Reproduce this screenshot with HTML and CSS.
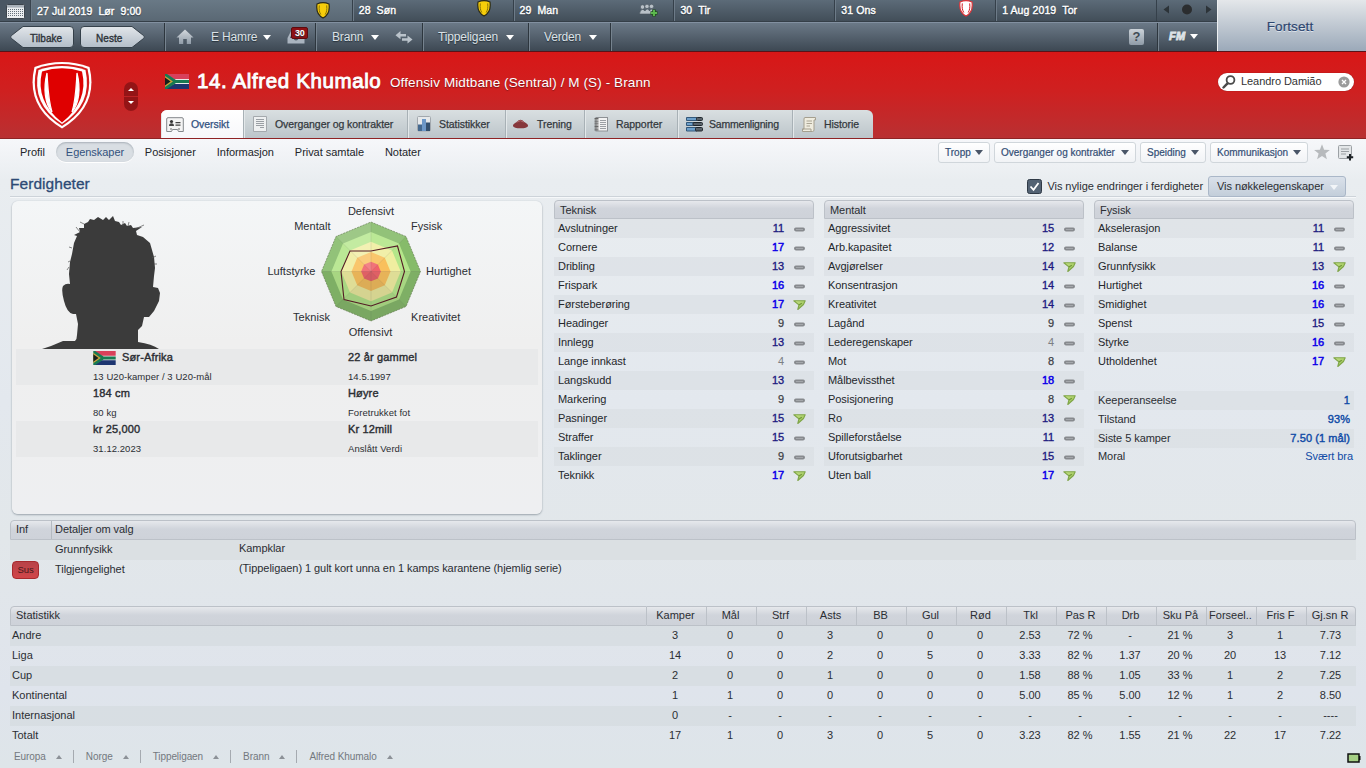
FILE: index.html
```html
<!DOCTYPE html>
<html lang="no">
<head>
<meta charset="utf-8">
<title>Alfred Khumalo</title>
<link rel="stylesheet" href="styles.css">
</head>
<body>
<svg class="defs" width="0" height="0">
  <defs>
    <linearGradient id="gArrow" x1="0" y1="0" x2="1" y2="1"><stop offset="0" stop-color="#c9e48a"/><stop offset="1" stop-color="#8fbc4c"/></linearGradient>
    <linearGradient id="gSteel" x1="0" y1="0" x2="0" y2="1"><stop offset="0" stop-color="#d4d9de"/><stop offset="1" stop-color="#8f9ba7"/></linearGradient>
    <linearGradient id="gBtn" x1="0" y1="0" x2="0" y2="1"><stop offset="0" stop-color="#e2e6ea"/><stop offset="1" stop-color="#b3bdc8"/></linearGradient>
    <symbol id="up" viewBox="0 0 13 12"><path d="M.8 1.800 12.200 1.800 10.500 5.500 4.800 10.500 5.900 5.900Z" fill="url(#gArrow)" stroke="#7fa548" stroke-width="1.100" stroke-linejoin="round"/><path d="M5.900 5.900 8.800 4.300" stroke="#6f9438" stroke-width="1.100"/></symbol>
    <symbol id="same" viewBox="0 0 13 12"><rect x="1" y="4.600" width="11" height="3.800" rx="1.800" fill="#878a8e"/><rect x="3" y="6" width="7" height="1" fill="#a4a7ab"/></symbol>
    <symbol id="shield" viewBox="0 0 16 17"><path d="M2 2Q8-.6 14 2 15.5 12 8 16 .5 12 2 2Z" fill="var(--a)" stroke="var(--b)" stroke-width="1.2"/><path d="M4.300 3.400C3.800 8 4.400 10 5.800 12.500M11.700 3.400C12.200 8 11.600 10 10.200 12.500" fill="none" stroke="var(--c)" stroke-width="1"/></symbol>
    <symbol id="flag" viewBox="0 0 24 15"><rect width="24" height="15" fill="#e8e8e8"/><path d="M0 0H24V5H9Z" fill="#d8405b"/><path d="M0 15H24V10H9Z" fill="#1d3570"/><path d="M0 0H2L11 6H24V9H11L2 15H0Z" fill="#177a52"/><path d="M0 2 8 7.5 0 13Z" fill="#c9a43c"/><path d="M0 3.600 5.600 7.500 0 11.400Z" fill="#16201d"/></symbol>
  </defs>
</svg>
<header class="top">
  <div class="bars">
    <div class="dates">
      <div class="cal"><svg width="19" height="15" viewBox="0 0 19 15"><rect x=".5" y=".5" width="18" height="14" rx="1" fill="#eceff1" stroke="#3c454d"/><rect x="1" y="1" width="17" height="2.600" fill="#aab2ba"/><path d="M2 5.500H17M2 7.500H17M2 9.500H17M2 11.500H17" stroke="#66717b" stroke-dasharray="1 1"/></svg></div>
      <div class="date now"><b>27 Jul 2019</b><b>Lør</b><b>9:00</b><svg class="sh yellow" width="16" height="17"><use href="#shield"/></svg></div>
      <div class="date"><b>28</b><b>Søn</b><svg class="sh yellow" width="16" height="17"><use href="#shield"/></svg></div>
      <div class="date"><b>29</b><b>Man</b><svg class="sh grp" width="19" height="14" viewBox="0 0 19 14"><g fill="#b9c1c8" stroke="#47525c" stroke-width=".6"><circle cx="3.500" cy="4" r="2.200"/><circle cx="8" cy="3.400" r="2.200"/><circle cx="12.500" cy="3.400" r="2.200"/><path d="M.5 11Q1 6.500 3.500 6.500 5 6.500 6 8 7 6 8.200 6 10 6.200 10.500 8 11.500 6 13 6 15 6.500 15.500 11Z"/></g><path d="M15 6.500V13.500M11.500 10H18.500" stroke="#234f20" stroke-width="3.600"/><path d="M15 7V13M12 10H18" stroke="#5cb84e" stroke-width="1.900"/></svg></div>
      <div class="date"><b>30</b><b>Tir</b></div>
      <div class="date"><b>31 Ons</b><svg class="sh red" width="16" height="17"><use href="#shield"/></svg></div>
      <div class="date"><b>1 Aug 2019</b><b>Tor</b></div>
      <div class="ctl"><svg width="60" height="20" viewBox="0 0 60 20"><path d="M12 5.500V13.500L6.500 9.500ZM49 5.500V13.500L54.500 9.500Z" fill="#2c3338"/><circle cx="30" cy="9.500" r="5" fill="#2b2d2f"/></svg></div>
    </div>
    <nav class="nav">
      <div class="navbtns">
        <svg class="navshape" width="64" height="22" viewBox="0 0 64 22"><path d="M13 .5H60Q63.500 .5 63.500 4V18Q63.500 21.500 60 21.500H13L1.500 12.500Q-.5 11 1.500 9.500Z"/></svg><span>Tilbake</span>
        <svg class="navshape" width="65" height="22" viewBox="0 0 65 22"><path d="M52 .5H4Q.5 .5 .5 4V18Q.5 21.500 4 21.500H52L63.500 12.500Q65.500 11 63.500 9.500Z"/></svg><span>Neste</span>
      </div>
      <div class="seg s1"><svg width="18" height="16" viewBox="0 0 18 16"><path d="M9 .5 17.500 8.500H15V15H10.800V10H7.200V15H3V8.500H.5Z" fill="url(#gSteel)"/></svg><span class="hamre">E Hamre</span><i class="dn"></i>
        <span class="inbox"><svg width="18" height="14" viewBox="0 0 18 14"><path d="M4 1H14L17.500 8V13.500H.5V8Z" fill="#aab4bf"/><path d="M5 3H13L15 8H11.500Q11 10.500 9 10.500T6.500 8H3Z" fill="#4c5863"/></svg><em>30</em></span></div>
      <div class="seg s2"><span>Brann</span><i class="dn"></i><svg width="18" height="14" viewBox="0 0 18 14"><path d="M5.500 1 .5 5.200 5.500 9.200V6.500H11V4H5.500ZM12.500 5.500 17.500 9.500 12.500 13.500V10.800H7V8.300H12.500Z" fill="#bac3cb"/></svg></div>
      <div class="seg s3"><span>Tippeligaen</span><i class="dn"></i></div>
      <div class="seg s4"><span>Verden</span><i class="dn"></i></div>
      <div class="seg s5"><span class="help">?</span></div>
      <div class="seg s6"><b class="fm">FM</b><i class="dn"></i></div>
    </nav>
  </div>
  <div class="continue">Fortsett</div>
</header>

<section class="hero">
  <svg class="crest" width="62" height="68" viewBox="0 0 62 68"><path d="M3.500 6Q31-4 58.500 6 68 45 31 67.500-6 45 3.500 6Z" fill="#fff"/><path d="M5.500 7.700Q31-1.500 56.500 7.700 65 44 31 65-3 44 5.500 7.700Z" fill="#d31b1b"/><path d="M7.500 9Q31 1 54.500 9 62 43 31 63 0 43 7.500 9Z" fill="#fff"/><path d="M11 10.500Q31 4 51 10.500 58 40 31 61.500 4 40 11 10.500Z" fill="#df0000"/><path d="M16 12C12 28 14 43 21 51 17 38 17 26 16 12ZM46 12C50 28 48 43 41 51 45 38 45 26 46 12Z" fill="#fff" stroke="#fff" stroke-width="1.200"/></svg>
  <div class="spin"><i class="t"></i><i class="b"></i></div>
  <div class="person">
    <div class="who"><svg width="24" height="15"><use href="#flag"/></svg><h1>14. Alfred Khumalo</h1><span>Offensiv Midtbane (Sentral) / M (S) - Brann</span></div>
    <div class="tabs">
      <div class="tab on t1"><svg width="18" height="16" viewBox="0 0 18 16"><path d="M2 .7H16Q17.300 .7 17.300 2V14.500H12.500L11.500 12.500H6.500L5.500 14.500H.7V2Q.7 .7 2 .7Z" fill="#f4f4f4" stroke="#83878b"/><circle cx="5.500" cy="4.500" r="1.600" fill="#333"/><path d="M3 9Q3 6.300 5.500 6.300T8 9ZM9.500 5H14.500V6.200H9.500ZM9.500 7.600H14.500V8.800H9.500Z" fill="#444"/><path d="M5 13V11M13 13V11" stroke="#999" stroke-width="1.500"/></svg>Oversikt</div>
      <div class="tab t2"><svg width="14" height="16" viewBox="0 0 14 16"><path d="M.5 .5H13.500V15.500H.5Z" fill="#eef0f1" stroke="#a4a9ad"/><path d="M3 3.500H11M3 5.500H11M3 7.500H11M3 9.500H11M7 11.500H11" stroke="#9a9fa4"/></svg>Overganger og kontrakter</div>
      <div class="tab t3"><svg width="14" height="16" viewBox="0 0 14 16"><rect x=".5" y=".5" width="13" height="14.500" rx="1" fill="#e6e9eb" stroke="#a2a8ae"/><path d="M1 8.500H5V15H1Z" fill="#45698f"/><path d="M5 3H9V15H5Z" fill="#6d98c8"/><path d="M9 6.500H13V15H9Z" fill="#34506e"/></svg>Statistikker</div>
      <div class="tab t4"><svg width="17" height="12" viewBox="0 0 18 12"><path d="M1 8Q1 6 5 4 9-1 13 4 17 6 17 8 16 10.500 9 10.500T1 8Z" fill="#87383c"/><path d="M5 4Q9 1 12.500 4" fill="none" stroke="#b26d70"/></svg>Trening</div>
      <div class="tab t5"><svg width="14" height="15" viewBox="0 0 14 15"><rect x="2" y=".5" width="11.500" height="13.500" fill="#f2f2f2" stroke="#8d9195"/><path d="M6 3.500H12M6 5.500H12M6 7.500H12M6 9.500H12M6 11.500H12" stroke="#9b9fa3"/><path d="M2.500 1V14" stroke="#666" stroke-width="4" stroke-dasharray="1 .6"/></svg>Rapporter</div>
      <div class="tab t6"><svg width="17" height="15" viewBox="0 0 17 15"><g fill="#6da0cb" stroke="#34597a"><path d="M.5 .5H11V3.500H.5ZM.5 5.500H8V8.500H.5ZM.5 10.500H11V14H.5Z"/></g><g fill="#59626a" stroke="#20272d"><rect x="10.500" y=".5" width="6" height="3" rx="1"/><rect x="7" y="5.500" width="9.500" height="3" rx="1"/><rect x="9.500" y="10.500" width="7" height="3.500" rx="1"/></g></svg>Sammenligning</div>
      <div class="tab t7"><svg width="14" height="15" viewBox="0 0 14 15"><path d="M3 .5H13.500V3H12V13Q12 14.500 10.500 14.500H.5V12H2V2Q2 .5 3 .5Z" fill="#efecdf" stroke="#a49f8f"/><path d="M4.500 4H10M4.500 6.500H10M4.500 9H8" stroke="#a9a493"/><path d="M.5 12H9V14" fill="none" stroke="#a49f8f"/></svg>Historie</div>
    </div>
  </div>
  <div class="search"><svg width="14" height="14" viewBox="0 0 14 14"><circle cx="8.500" cy="5" r="3.900" fill="none" stroke="#4a4a4a" stroke-width="1.800"/><path d="M5.500 8.300 1.500 12.500" stroke="#4a4a4a" stroke-width="2.400" stroke-linecap="round"/></svg><span>Leandro Damião</span><svg width="12" height="12" viewBox="0 0 12 12"><circle cx="6" cy="6" r="5.600" fill="#9b9b9b"/><path d="M4 4 8 8M8 4 4 8" stroke="#fff" stroke-width="1.300"/></svg></div>
</section>

<main>
  <div class="sub">
    <div class="links"><span>Profil</span><span class="pill">Egenskaper</span><span>Posisjoner</span><span>Informasjon</span><span>Privat samtale</span><span>Notater</span></div>
    <div class="acts"><span class="b1">Tropp<i class="dn"></i></span><span class="b2">Overganger og kontrakter<i class="dn"></i></span><span class="b3">Speiding<i class="dn"></i></span><span class="b4">Kommunikasjon<i class="dn"></i></span>
      <svg class="star" width="16" height="16" viewBox="0 0 16 16"><path d="M8 .3 10.100 5.700 15.900 6 11.400 9.600 12.900 15.300 8 12.100 3.100 15.300 4.600 9.600 .1 6 5.900 5.700Z" fill="#b7babd"/></svg>
      <svg width="16" height="16" viewBox="0 0 16 16"><rect x=".5" y=".5" width="13" height="13" rx="1" fill="#e3e6e8" stroke="#9ca1a5"/><path d="M3 4H11M3 6.500H11M3 9H8" stroke="#9a9fa3"/><path d="M12 9V15.500M8.800 12.200H15.200" stroke="#1d2226" stroke-width="2"/></svg></div>
  </div>
  <div class="title"><h2>Ferdigheter</h2><svg class="chk" width="15" height="15" viewBox="0 0 15 15"><rect x=".5" y=".5" width="14" height="14" rx="2" fill="#536273" stroke="#2f3a46"/><path d="M3.500 7.500 6.500 10.800 11.500 4" fill="none" stroke="#fff" stroke-width="1.800"/></svg><span class="vis">Vis nylige endringer i ferdigheter</span><span class="key">Vis nøkkelegenskaper<i class="dn"></i></span></div>

  <div class="cols">
    <div class="card">
      <div class="pics">
        <svg class="face" width="120" height="133" viewBox="0 0 120 133"><path d="M0 133Q10 130 21 125H33Q35 123 35 119L36 108 34 98H31Q25 97 22 85 19 74 21 70 24 67 28 68L27 58 28 46 30 38 32 27 35 20 32 19 38 16 37 12 42 12 42 8 46 6 48 3 52 4 56 1 61 4 64 1 67 4 71 0 73 5 77 6 79 9 83 7 85 10 89 9 91 12 100 11 94 15 95 19 101 21 108 27 110 34 112 41 113 52 112 60 111 71 116 72 118 77 117 85 112 95 107 101 102 101 100 110 96 114V126Q110 128 117 133Z" fill="#3b3b3b"/><path d="M38 16 34 11M30 32 27 31M28 45 26 46M27 51 25 54M110 42 114 40M112 48 115 48M81 10 81 5M86 10 87 6M93 13 102 9M42 8 38 6" stroke="#555" stroke-width=".7"/></svg>
        <svg class="radar" width="250" height="140" viewBox="262 205 250 140">
          <g transform="translate(371 271.500)">
            <path fill="#86bb6a" d="M0-49.500 35-35 49.500 0 35 35 0 49.500-35 35-49.500 0-35-35Z"/>
            <path fill="#b4e68a" d="M0-39.600 28-28 39.600 0 28 28 0 39.600-28 28-39.600 0-28-28Z"/>
            <path fill="#f0eea0" d="M0-29.700 21-21 29.700 0 21 21 0 29.700-21 21-29.700 0-21-21Z"/>
            <path fill="#f9c05c" d="M0-19.500 13.800-13.800 19.500 0 13.800 13.800 0 19.500-13.800 13.800-19.500 0-13.800-13.800Z"/>
            <path fill="#f0646a" d="M0-9.800 6.900-6.900 9.800 0 6.900 6.900 0 9.800-6.900 6.900-9.800 0-6.900-6.900Z"/>
            <path fill="#fff" fill-opacity=".2" d="M0 0V-49.500L-35-35Z"/>
            <path fill="#fff" fill-opacity=".1" d="M0 0V-49.500L35-35ZM0 0-35-35-49.500 0Z"/>
            <path fill="#333" fill-opacity=".09" d="M0 0H49.500L35 35ZM0 0-49.500 0-35 35Z"/>
            <path fill="#333" fill-opacity=".14" d="M0 0V49.500L35 35ZM0 0V49.500L-35 35Z"/>
            <path stroke="#555" stroke-opacity=".12" d="M0-49V49M-49 0H49M-35-35 35 35M35-35-35 35"/>
            <path fill="none" stroke="#60744f" stroke-opacity=".6" stroke-dasharray="2 1" d="M0-49.500 35-35 49.500 0 35 35 0 49.500-35 35-49.500 0-35-35Z"/>
            <path fill="none" stroke="#541b25" stroke-width="1.100" d="M-21-20.500 0-20.500 26.500-25.500 33.500 0 25.500 25.500 0 34.500-27 28-30 0Z"/>
          </g>
          <g class="rl"><text x="371" y="215" text-anchor="middle">Defensivt</text><text x="411" y="230">Fysisk</text><text x="426" y="275">Hurtighet</text><text x="411" y="321">Kreativitet</text><text x="370.500" y="336" text-anchor="middle">Offensivt</text><text x="330" y="321" text-anchor="end">Teknisk</text><text x="315.500" y="275" text-anchor="end">Luftstyrke</text><text x="330.500" y="230" text-anchor="end">Mentalt</text></g>
        </svg>
      </div>
      <div class="bio alt2"><div><b><svg width="23" height="14" viewBox="0 0 23 14"><use href="#flag" width="23" height="14"/></svg>Sør-Afrika</b><small>13 U20-kamper / 3 U20-mål</small></div><div><b>22 år gammel</b><small>14.5.1997</small></div></div>
      <div class="bio"><div><b>184 cm</b><small>80 kg</small></div><div><b>Høyre</b><small>Foretrukket fot</small></div></div>
      <div class="bio alt2"><div><b>kr 25,000</b><small>31.12.2023</small></div><div><b>Kr 12mill</b><small>Anslått Verdi</small></div></div>
    </div>
    <div class="attrs" data-title="Teknisk" data-rows="Avslutninger 11|Cornere 17|Dribling 13|Frispark 16|Førsteberøring 17+|Headinger 9|Innlegg 13|Lange innkast 4|Langskudd 13|Markering 9|Pasninger 15+|Straffer 15|Taklinger 9|Teknikk 17+"></div>
    <div class="attrs" data-title="Mentalt" data-rows="Aggressivitet 15|Arb.kapasitet 12|Avgjørelser 14+|Konsentrasjon 14|Kreativitet 14|Lagånd 9|Lederegenskaper 4|Mot 8|Målbevissthet 18|Posisjonering 8+|Ro 13|Spilleforståelse 11|Uforutsigbarhet 15|Uten ball 17+"></div>
    <div class="third">
      <div class="attrs" data-title="Fysisk" data-rows="Akselerasjon 11|Balanse 11|Grunnfysikk 13+|Hurtighet 16|Smidighet 16|Spenst 15|Styrke 16|Utholdenhet 17+"></div>
      <div class="facts"><div><span>Keeperanseelse</span><b>1</b></div><div><span>Tilstand</span><b>93%</b></div><div><span>Siste 5 kamper</span><b>7.50 (1 mål)</b></div><div class="moral"><span>Moral</span><em>Svært bra</em></div></div>
    </div>
  </div>

  <div class="info">
    <div class="hd"><span class="c1">Inf</span><span>Detaljer om valg</span></div>
    <div class="ir alt"><span class="c1"></span><span class="c2">Grunnfysikk</span><span class="c3">Kampklar</span></div>
    <div class="ir"><span class="c1"><i class="sus">Sus</i></span><span class="c2">Tilgjengelighet</span><span class="c3">(Tippeligaen) 1 gult kort unna en 1 kamps karantene (hjemlig serie)</span></div>
  </div>

  <table class="stats">
    <thead><tr><th>Statistikk</th><th>Kamper</th><th>Mål</th><th>Strf</th><th>Asts</th><th>BB</th><th>Gul</th><th>Rød</th><th>Tkl</th><th>Pas R</th><th>Drb</th><th>Sku På</th><th>Forseel..</th><th>Fris F</th><th>Gj.sn R</th></tr></thead>
    <tbody>
      <tr><td>Andre</td><td>3</td><td>0</td><td>0</td><td>3</td><td>0</td><td>0</td><td>0</td><td>2.53</td><td>72 %</td><td>-</td><td>21 %</td><td>3</td><td>1</td><td>7.73</td></tr>
      <tr><td>Liga</td><td>14</td><td>0</td><td>0</td><td>2</td><td>0</td><td>5</td><td>0</td><td>3.33</td><td>82 %</td><td>1.37</td><td>20 %</td><td>20</td><td>13</td><td>7.12</td></tr>
      <tr><td>Cup</td><td>2</td><td>0</td><td>0</td><td>1</td><td>0</td><td>0</td><td>0</td><td>1.58</td><td>88 %</td><td>1.05</td><td>33 %</td><td>1</td><td>2</td><td>7.25</td></tr>
      <tr><td>Kontinental</td><td>1</td><td>1</td><td>0</td><td>0</td><td>0</td><td>0</td><td>0</td><td>5.00</td><td>85 %</td><td>5.00</td><td>12 %</td><td>1</td><td>2</td><td>8.50</td></tr>
      <tr><td>Internasjonal</td><td>0</td><td>-</td><td>-</td><td>-</td><td>-</td><td>-</td><td>-</td><td>-</td><td>-</td><td>-</td><td>-</td><td>-</td><td>-</td><td>----</td></tr>
      <tr><td>Totalt</td><td>17</td><td>1</td><td>0</td><td>3</td><td>0</td><td>5</td><td>0</td><td>3.23</td><td>82 %</td><td>1.55</td><td>21 %</td><td>22</td><td>17</td><td>7.22</td></tr>
    </tbody>
  </table>
</main>
<footer><span>Europa<i></i></span><span>Norge<i></i></span><span>Tippeligaen<i></i></span><span>Brann<i></i></span><span>Alfred Khumalo<i></i></span><svg class="bat" width="14" height="10" viewBox="0 0 14 10"><rect x="1" y="1" width="11" height="8" fill="#a5cf84" stroke="#111" stroke-width="1.500"/><path d="M12 3H13.500V7H12Z" fill="#111"/></svg></footer>
<script src="app.js"></script>
</body>
</html>
```
FILE: styles.css
```css
* { box-sizing: border-box; }
body { margin: 0; width: 1366px; height: 768px; overflow: hidden; font: 11px/13px "Liberation Sans", Arial, sans-serif; letter-spacing: -.06px; color: #2b2e33; background: linear-gradient(#f6f7fa 139px, #e9edf0 180px, #e3e8ee 400px, #e2e7ea 540px, #dfe4ec 690px, #dee5e9); display: flex; flex-direction: column; }
.defs { position: absolute; }
svg { display: block; flex: none; }
i, em { font-style: normal; }
.dn { width: 0; height: 0; border: 4px solid transparent; border-top: 5px solid currentColor; border-bottom: 0; flex: none; }

.top { display: flex; height: 52px; flex: none; border-bottom: 1px solid #5a1218; }
.bars { width: 1217px; }
.dates { display: flex; height: 22px; background: linear-gradient(#5c6b78, #424e59); border-bottom: 1px solid #353f48; color: #fff; }
.cal { width: 31px; padding: 4px 0 0 6px; background: #4a5763; border-right: 1px solid #39444e; }
.date { width: 161px; display: flex; gap: 6px; padding: 4px 0 0 6px; border-left: 1px solid #35404a; box-shadow: inset 1px 0 #6d7b88; text-shadow: 0 1px 1px #222c35; position: relative; }
.date b { font-weight: normal; font-size: 10.500px; letter-spacing: .1px; -webkit-text-stroke: .4px #fff; }
.date.now { width: 321px; padding-left: 6px; padding-top: 5px; background: linear-gradient(#697986, #5a6874); border-left: 0; }
.sh { position: absolute; top: 0; right: 21px; }
.now .sh { top: 2px; }
.grp { right: 15px; top: 3px; }
.yellow { --a: #f7ce0a; --b: #2a2a18; --c: #8b7408; }
.red { --a: #fff; --b: #e03338; --c: #d31c20; }
.ctl { flex: 1; border-left: 1px solid #35404a; }
.nav { height: 29px; display: flex; background: linear-gradient(#6b7987, #3d4853); border-top: 1px solid #8290a0; color: #dce2e7; font-size: 12px; }
.navbtns { width: 164px; padding: 3px 0 0 10px; display: grid; grid-template-columns: 65px 66px; grid-template-rows: 22px; column-gap: 5px; }
.navshape { grid-row: 1; fill: url(#gBtn); stroke: #35404a; }
.navbtns span { grid-row: 1; align-self: center; padding-top: 2px; font-size: 10px; letter-spacing: .05px; color: #2c3238; -webkit-text-stroke: .35px #2c3238; }
.navbtns span:nth-of-type(1) { grid-column: 1; padding-left: 20px; }
.navbtns span:nth-of-type(2) { grid-column: 2; padding-left: 16px; }
.navshape:nth-of-type(1) { grid-column: 1; }
.navshape:nth-of-type(2) { grid-column: 2; }
.seg { display: flex; align-items: center; border-left: 1px solid #2d363e; box-shadow: inset 1px 0 #76838f; text-shadow: 0 1px 1px #27313a; letter-spacing: -.15px; }
.seg .dn { color: #fff; margin: 1px 0 0 10px; }
.s1 { width: 151px; padding-left: 11px; }
.s1 > .dn { margin-left: 6px; }
.hamre { margin-left: 17px; }
.inbox { position: relative; margin-left: 16px; }
.inbox em { position: absolute; left: 4px; top: -3px; width: 17px; height: 12px; background: #8e1014; border: 1px solid #5d0a0e; border-radius: 2px; color: #fff; font: bold 9px/10px "Liberation Sans", sans-serif; text-align: center; }
.s2 { width: 107px; padding-left: 16px; }
.s2 .dn { margin-left: 8px; }
.s2 svg { margin-left: 16px; }
.s3 { width: 106px; padding-left: 15px; }
.s3 .dn, .s4 .dn { margin-left: 8px; }
.s4 { width: 82px; padding-left: 15px; }
.s5 { flex: 1; padding-right: 13px; justify-content: flex-end; }
.help { width: 15px; height: 16px; border-radius: 2px; background: linear-gradient(#ccd3d9, #8f9ba7); color: #414b55; font: bold 13px/16px "Liberation Sans", sans-serif; text-align: center; text-shadow: none; }
.s6 { width: 60px; padding: 0 0 2px 11px; }
.fm { font-style: italic; font-size: 11px; letter-spacing: .3px; -webkit-text-stroke: .9px #dce2e7; }
.s6 .dn { margin-left: 5px; }
.continue { flex: 1; background: linear-gradient(#e4e7ea, #9ba9b9); border-left: 1px solid #edf0f2; color: #2d466f; font-size: 13.500px; letter-spacing: .1px; line-height: 53px; text-align: center; padding-right: 4px; text-shadow: 0 1px #dfe5ec; -webkit-text-stroke: .2px #2d466f; }

.hero { height: 87px; flex: none; display: flex; background: linear-gradient(#d81717, #cf2020 45%, #b93032); border-bottom: 1px solid #8f2325; color: #fff; }
.crest { margin: 9px 0 0 31px; }
.spin { margin: 30px 0 0 31px; width: 14px; height: 29px; border-radius: 7px; background: linear-gradient(#941416 14px, #bd2224 14px, #bd2224 15px, #941416 15px); display: flex; flex-direction: column; justify-content: space-between; align-items: center; padding: 6px 0 7px; }
.spin i { border: 3px solid transparent; height: 0; }
.spin .t { border-top: 0; border-bottom-color: #fff; }
.spin .b { border-bottom: 0; border-top-color: #fff; }
.person { margin-left: 23px; display: flex; flex-direction: column; }
.who { display: flex; height: 58px; align-items: center; padding: 0 0 0 4px; text-shadow: 0 1px 1px #7b1618; }
.who svg { margin-top: 1px; }
.who h1 { margin: 0 0 0 8px; width: 185px; white-space: nowrap; font: 20.500px/24px "Liberation Sans", sans-serif; letter-spacing: .62px; -webkit-text-stroke: .9px #fff; }
.who span { font-size: 13.500px; letter-spacing: .1px; margin-left: 8px; padding-top: 2px; }
.tabs { display: flex; height: 28px; width: 712px; border-radius: 6px 6px 0 0; background: linear-gradient(#d9dfe1, #bcc5ca); overflow: hidden; color: #33383d; font-size: 10.500px; letter-spacing: -.06px; }
.tab { display: flex; flex: none; align-items: center; padding-left: 9px; border-left: 1px solid #a8b1b6; box-shadow: inset 1px 0 #e3e8ea; -webkit-text-stroke: .25px currentColor; }
.tab.on { background: linear-gradient(#fff, #f6f7fa); color: #31517f; border: 0; padding-left: 5px; height: 29px; }
.tab svg { margin-right: 8px; }
.tab.on svg { margin-right: 7px; }
.t1 { width: 82px; } .t2 { width: 164px; } .t3 { width: 98px; } .t4 { width: 79px; } .t5 { width: 93px; } .t6 { width: 115px; letter-spacing: -.2px; } .t7 { width: 81px; }
.t3 { padding-left: 9px; } .t4 { padding-left: 6px; } .t6 { padding-left: 8px; } .t7 { padding-left: 9px; }
.t6 svg { margin-right: 6px; }
.search { margin: 21px 12px 0 auto; width: 136px; height: 18px; border-radius: 9px; background: #fff; color: #333; display: flex; align-items: center; padding: 0 4px; box-shadow: 0 0 1px #6b1012; }
.search span { flex: 1; padding: 0 0 1px 5px; letter-spacing: -.06px; }

main { padding: 0 10px; height: 607px; flex: none; }
.sub { display: flex; height: 35px; justify-content: space-between; align-items: flex-start; margin-right: 2px; }
.links { display: flex; padding: 7px 0 0 10px; color: #222529; letter-spacing: -.04px; }
.links span { margin-right: 21px; }
.links .pill { margin: -4px 11px 0 -10px; padding: 4px 10px; width: 78px; height: 20px; border-radius: 10px; background: #d9dee3; box-shadow: inset 0 1px 2px #a8b0b8, 0 1px #fff; color: #33527d; }
.acts { display: flex; padding-top: 3px; gap: 4px; font-size: 10px; letter-spacing: 0; color: #334e75; align-items: center; }
.acts span { height: 21px; border: 1px solid #d0d6db; border-radius: 3px; background: linear-gradient(#fff, #f1f3f6); display: flex; align-items: center; justify-content: space-between; padding: 0 6px; -webkit-text-stroke: .2px currentColor; }
.acts .dn { color: #4a5668; }
.b1 { width: 52px; } .b2 { width: 142px; } .b3 { width: 66px; } .b4 { width: 98px; }
.acts .star { margin: -2px 4px 0 2px; }
.title { display: flex; height: 23px; border-bottom: 1px solid #cdd3d9; box-shadow: 0 1px #f6f8fa; align-items: center; }
.title h2 { margin: 0 auto 0 0; font: 15.500px/18px "Liberation Sans", sans-serif; letter-spacing: .05px; color: #2d4a75; -webkit-text-stroke: .3px #2d4a75; padding-bottom: 3px; }
.vis { margin: 2px 5px 0 5px; }
.chk { margin-top: 2px; }
.key { width: 138px; height: 21px; margin: 2px 10px 0 0; border: 1px solid #aab7c8; border-radius: 3px; background: linear-gradient(#dae1ea, #c3ceda); display: flex; align-items: center; justify-content: space-between; padding: 0 7px 0 8px; }
.key .dn { color: #f2f5f8; margin-top: 3px; }

.cols { display: flex; margin-top: 3px; height: 320px; }
.card { width: 530px; height: 313px; margin: 1px 12px 0 2px; border-radius: 6px; background: linear-gradient(#f4f6f7, #efefef 45%, #eeeff1); box-shadow: 0 1px 2px #9ca5ad, 0 0 1px #b5bdc4; }
.pics { display: flex; height: 148px; }
.face { margin: 15px 0 0 30px; }
.radar { margin: 4px 0 0 100px; }
.rl { font-size: 11px; letter-spacing: .04px; fill: #2b2e33; }
.bio { display: flex; height: 36px; margin: 0 4px; padding-left: 77px; }
.alt2 { background: #e8e9ea; }
.bio > div { width: 255px; flex: none; display: grid; grid-template-rows: 17px 19px; align-items: center; }
.bio > div:last-child { width: 190px; }
.bio b { display: flex; align-items: center; gap: 6px; letter-spacing: .15px; }
.bio small { font-size: 9.500px; letter-spacing: .06px; padding-top: 2px; }
.bio b, .facts b { font-weight: normal; -webkit-text-stroke: .4px currentColor; }
.attrs { width: 260px; margin-right: 10px; }
.hd { height: 20px; border: 1px solid #bcc1c8; border-radius: 4px 4px 0 0; background: linear-gradient(#e6e8ec, #d0d4db 45%, #ced2d9); display: flex; line-height: 17px; padding-left: 5px; }
.attrs .hd { height: 19px; line-height: 18px; }
.ar { display: flex; height: 19px; padding: 3px 8px 0 4px; color: #24272b; }
.ar:nth-child(even) { background: rgba(212, 216, 221, .42); }
.ar span { flex: 1; }
.ar svg { margin: 1px 0 0 9px; width: 13px; height: 12px; }
.ar b { font-weight: normal; -webkit-text-stroke: .25px currentColor; }
.ar .lo { color: #7c7f83; -webkit-text-stroke: 0; } .mid { color: #3d4045; } .good { color: #201a80; } .best { color: #0c00e8; }
.ar .good { -webkit-text-stroke: .35px currentColor; }
.ar .best { -webkit-text-stroke: .5px currentColor; }
.third { width: 260px; }
.facts { margin-top: 20px; }
.facts div { height: 19px; padding: 3px 4px 0; display: flex; justify-content: space-between; }
.facts div:nth-child(odd) { background: rgba(212, 216, 221, .42); }
.facts b, .facts em { color: #0f4aa6; }
.facts b { letter-spacing: .08px; }
.facts .moral { padding: 2px 1px 0 4px; }

.info { height: 86px; }
.info .hd { padding: 0; }
.hd .c1 { width: 41px; padding-left: 5px; border-right: 1px solid #b4bac1; margin-right: 3px; }
.ir { display: flex; height: 20px; align-items: center; }
.alt { background: #dbe0e3; }
.ir .c1 { width: 45px; padding-left: 2px; }
.ir .c2 { width: 184px; padding-bottom: 2px; }
.ir .c3 { padding-bottom: 4px; }
.sus { display: block; width: 27px; height: 18px; border: 1px solid #a82a2e; border-radius: 4px; background: linear-gradient(#b84349, #d14549); font-size: 9.500px; line-height: 16px; text-align: center; color: #47191b; }

.stats { width: 1346px; table-layout: fixed; border-collapse: separate; border-spacing: 0; text-align: center; }
.stats th, .stats td { height: 20px; padding: 0; width: 50px; font-weight: normal; letter-spacing: 0; }
.stats td { padding: 0 4px 1px 0; }
.stats th { border: 1px solid #bcc1c8; border-left: 0; padding: 0 2px 1px 0; background: linear-gradient(#e6e8ec, #d0d4db 45%, #ced2d9); white-space: nowrap; }
.stats th:first-child { width: 637px; border-left: 1px solid #bcc1c8; padding-left: 5px; border-radius: 4px 0 0; text-align: left; }
.stats th:last-child { width: 49px; border-radius: 0 4px 0 0; }
.stats td:last-child { padding-right: 2px; }
.stats th:nth-child(2) { width: 60px; }
.stats td:first-child { text-align: left; padding-left: 2px; }
.stats tbody tr:nth-child(odd) { background: rgba(205, 212, 214, .4); }

footer { display: flex; height: 22px; padding: 4px 5px 0 14px; font-size: 10px; letter-spacing: -.08px; color: #73787e; }
footer span { display: flex; align-items: center; height: 13px; margin-right: 12px; padding-right: 11px; border-right: 1px solid #a5aab0; }
footer span:nth-of-type(5) { border: 0; }
footer i { border: 3px solid transparent; border-top: 0; border-bottom: 4px solid #8c9197; margin-left: 10px; }
.bat { margin: 3px 0 0 auto; }
```
FILE: app.js
```js
// Builds the attribute lists from their compact "name value" rows.
document.querySelectorAll('.attrs').forEach(function (el) {
  var html = '<div class="hd">' + el.dataset.title + '</div>';
  el.dataset.rows.split('|').forEach(function (row) {
    var m = row.match(/^(.*) (\d+)(\+?)$/);
    var v = Number(m[2]);
    var cls = v > 15 ? 'best' : v > 10 ? 'good' : v > 5 ? 'mid' : 'lo';
    html += '<div class="ar"><span>' + m[1] + '</span><b class="' + cls + '">' + v + '</b><svg><use href="#' + (m[3] ? 'up' : 'same') + '"/></svg></div>';
  });
  el.innerHTML = html;
});
```
